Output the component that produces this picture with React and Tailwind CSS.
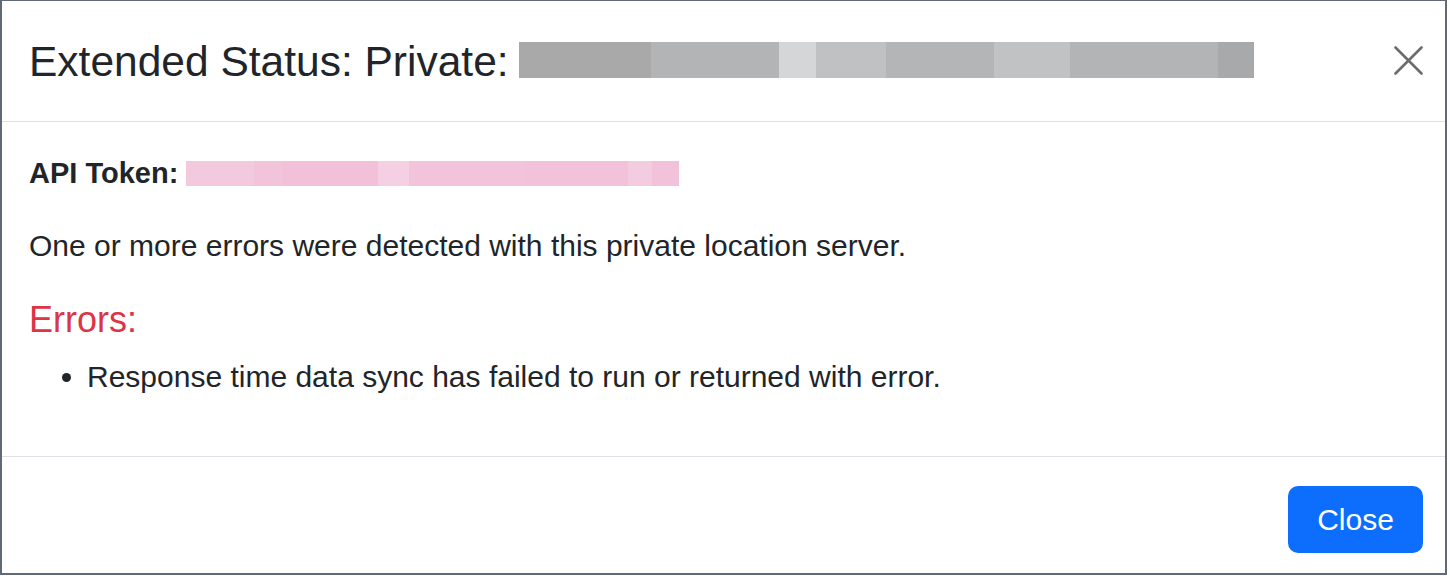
import React from 'react';

const titleBlocks = [
    { w: 132, c: '#a9a9aa' },
    { w: 128, c: '#b3b4b5' },
    { w: 37, c: '#d5d6d7' },
    { w: 70, c: '#c0c1c2' },
    { w: 108, c: '#b4b5b6' },
    { w: 76, c: '#c1c2c3' },
    { w: 148, c: '#b3b4b5' },
    { w: 36, c: '#a8a9aa' },
];

const tokenBlocks = [
    { w: 68, c: '#f3c9dd' },
    { w: 29, c: '#f2c4da' },
    { w: 95, c: '#f2c0d8' },
    { w: 31, c: '#f5d0e2' },
    { w: 116, c: '#f2c4dc' },
    { w: 103, c: '#f2c2da' },
    { w: 24, c: '#f3cce0' },
    { w: 27, c: '#f2c1da' },
];

// redacted value, drawn as a row of flat blocks
const Redacted = ({ blocks, height }) => (
    <span className="inline-flex" style={{ height }}>
        {blocks.map((b, i) => (
            <span key={i} style={{ width: b.w, background: b.c }} />
        ))}
    </span>
);

const App = () => {
    return (
        <div className="w-[1450px] h-[578px] bg-white font-['Liberation_Sans',Arial,sans-serif] text-[#212529]">
            <div className="w-[1447px] h-[575px] border-l-2 border-r-2 border-t border-b-2 border-[#5f6a76] flex flex-col">
                <div className="h-[121px] shrink-0 border-b border-[#dee2e6] flex items-center justify-between pl-[27px] pr-[22px]">
                    <div className="flex items-center">
                        <h4 className="text-[42.5px] leading-[1.2] m-0">Extended Status: Private:</h4>
                        <span className="ml-[10px] -mt-[2px] flex">
                            <Redacted blocks={titleBlocks} height={36} />
                        </span>
                    </div>
                    <button className="w-[29px] h-[29px] -mt-[1px] text-[#6c6c6c]">
                        <svg width="29" height="29" viewBox="0 0 29 29" fill="none" stroke="currentColor" strokeWidth="2.6" strokeLinecap="round">
                            <path d="M1.5 1.5 L27.5 27.5 M27.5 1.5 L1.5 27.5" />
                        </svg>
                    </button>
                </div>

                <div className="shrink-0 h-[335px] border-b border-[#dee2e6] pl-[27px] pr-[22px] pt-[30px] text-[30px] leading-[1.5]">
                    <p className="mb-[27px] flex items-center">
                        <b className="font-bold text-[29px]">API Token:</b>
                        <span className="ml-[8px] flex">
                            <Redacted blocks={tokenBlocks} height={25} />
                        </span>
                    </p>
                    <p className="mb-[30px]">One or more errors were detected with this private location server.</p>
                    <h5 className="text-[36px] leading-[1.2] text-[#dc3545] mb-[13px]">Errors:</h5>
                    <ul className="list-disc pl-[58px]">
                        <li>Response time data sync has failed to run or returned with error.</li>
                    </ul>
                </div>

                <div className="flex-1 flex justify-end items-start pt-[29px] pr-[22px]">
                    <button className="h-[67px] w-[135px] rounded-[10px] bg-[#0d6efd] text-white text-[30px] leading-none">
                        Close
                    </button>
                </div>
            </div>
        </div>
    );
};

export default App;
